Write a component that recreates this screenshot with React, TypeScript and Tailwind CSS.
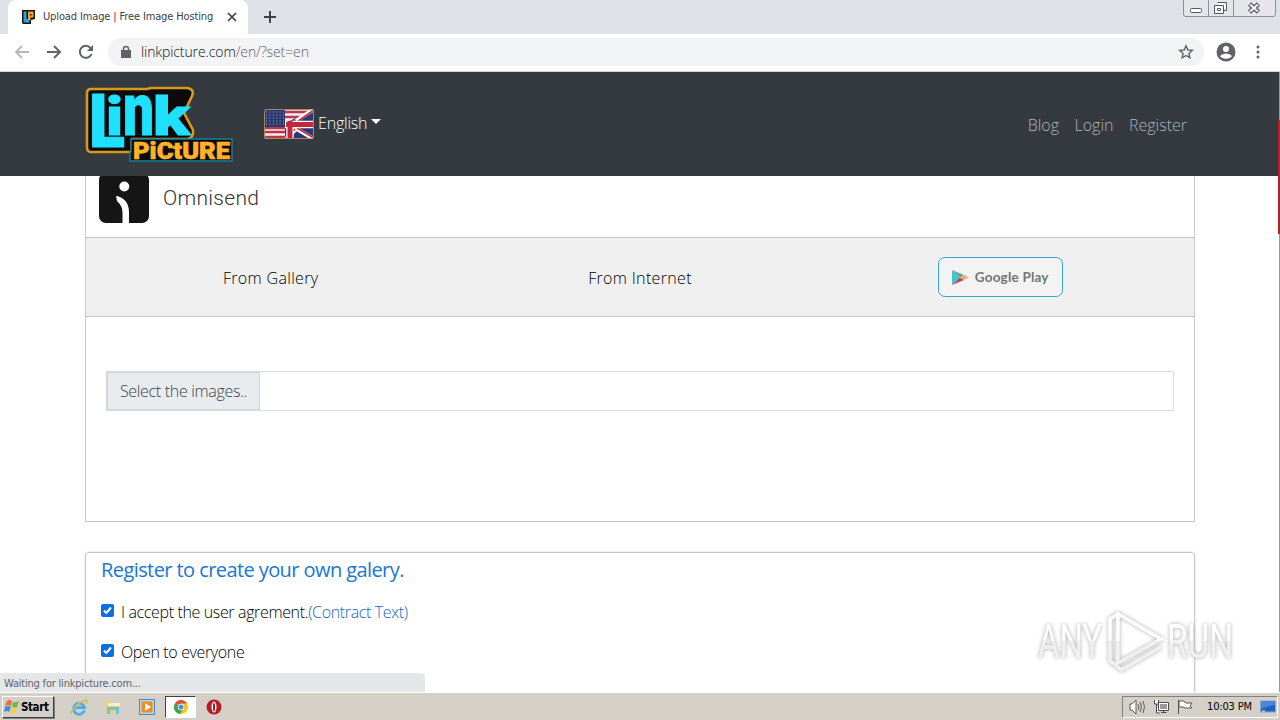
import type { ReactNode } from "react";

const LinkPictureLogo = () => (
  <svg width="148" height="77" viewBox="0 0 148 77" className="shrink-0 overflow-visible">
    <path
      d="M6 3H62L66 2H102Q110 3 107 10L99 27L108 44Q109 52 102 53H47V66H6Q2 66 2 61V7Q2 3 6 3Z"
      fill="#0b0b0b"
      stroke="#d99a1b"
      strokeWidth="2.6"
      strokeLinejoin="round"
    />
    <path d="M46 53H147V75H45V66H46Z" fill="#0b0b0b" stroke="#12829b" strokeWidth="1.5" />
    <g fontFamily="Roboto, sans-serif" fontWeight="900">
      <text fill="#1fe0ff" stroke="#1fe0ff" strokeWidth="1">
        <tspan x="4" y="61" fontSize="75" textLength="36" lengthAdjust="spacingAndGlyphs">L</tspan>
        <tspan x="21" y="48.500" fontSize="54" textLength="17" lengthAdjust="spacingAndGlyphs">i</tspan>
        <tspan x="38" y="48.500" fontSize="74" textLength="31" lengthAdjust="spacingAndGlyphs">n</tspan>
        <tspan x="68" y="48.500" fontSize="54" textLength="37" lengthAdjust="spacingAndGlyphs">k</tspan>
      </text>
      <text x="48" y="72.500" fontSize="23" fill="#ffb129" stroke="#ffb129" strokeWidth=".6" textLength="97" lengthAdjust="spacingAndGlyphs">
        PiCtURE
      </text>
    </g>
  </svg>
);

const Flag = () => (
  <svg width="50" height="30" viewBox="0 0 50 30" className="shrink-0 rounded-[3px]">
    <rect width="50" height="30" fill="#f3eef0" />
    <path d="M21 3H50M21 8H50M21 13H50M0 19H22M0 23H22M0 28H22" stroke="#bd3546" strokeWidth="2.4" />
    <path d="M50 0V30H21V14L34 8Z" fill="#283878" />
    <path d="M50 0L32 12M31 19L50 30M22 30L33 19" stroke="#fff" strokeWidth="4" />
    <path d="M50 1L33 13M33 19L50 29M22 29L31 20" stroke="#c1283c" strokeWidth="1.8" />
    <path d="M21 15.500H50M26 12V30" stroke="#fff" strokeWidth="7.500" />
    <path d="M22 15.500H50M26 12V30" stroke="#c1283c" strokeWidth="5" />
    <rect width="21" height="18" fill="#29386f" />
    {[3, 6, 9, 12, 15].map((y) => (
      <path key={y} d={`M2 ${y}H20`} stroke="#aab4d6" strokeWidth="1" strokeDasharray="1 2.4" />
    ))}
    <rect x=".5" y=".5" width="49" height="29" rx="3" fill="none" stroke="#a38a57" />
  </svg>
);

const Omnisend = () => (
  <svg width="50" height="50" viewBox="0 0 50 50" className="shrink-0">
    <rect width="50" height="50" rx="7" fill="#151515" />
    <circle cx="25.300" cy="13.500" r="5" fill="#fff" />
    <path d="M17 23C25 24 30 30 30 39V50H23.500V40C23.500 34 21 31 18 28Z" fill="#fff" />
  </svg>
);

const Browser = () => (
  <>
    <div className="flex h-[34px] shrink-0 items-start bg-[#dee1e6]">
      <div className="ml-2 flex h-[34px] w-[240px] items-center rounded-t-lg bg-white pl-3">
        <svg width="16" height="16" viewBox="0 0 16 16" className="shrink-0">
          <path d="M2 1H15V10L11 11V15H3L2 14Z" fill="#161616" />
          <path d="M3.500 2.500H6.500V10H9.500V13.500H3.500Z" fill="#28a5df" />
          <path d="M8 2.500H13.500V8.500H10.500V11H8Z" fill="#f0a034" />
          <path d="M10 5H11.500V6.500H10Z" fill="#161616" />
        </svg>
        <span className="mt-px ml-[7px] w-[172px] overflow-hidden font-['DejaVu_Sans_Condensed','DejaVu_Sans',sans-serif] text-[11px] tracking-[-0.13px] whitespace-nowrap text-[#3c4043]">
          Upload Image | Free Image Hosting
        </span>
        <svg width="16" height="16" viewBox="0 0 16 16" className="ml-[9px] shrink-0" stroke="#3c4043" strokeWidth="1.7">
          <path d="M4 4L12 12M12 4L4 12" />
        </svg>
      </div>
      <svg width="16" height="34" viewBox="0 0 16 34" className="ml-[14px]" stroke="#3c4043" strokeWidth="1.9">
        <path d="M2 17H14M8 11V23" />
      </svg>
      <svg width="93" height="18" viewBox="0 0 93 18" className="mr-[4px] ml-auto" fill="none">
        <path d="M.5 0V14Q.5 16.500 3 16.500H90Q92.500 16.500 92.500 14V0M25.500 0V16M50.500 0V16" fill="#e4e6e9" stroke="#8a8f98" />
        <rect x="7.500" y="8.500" width="11" height="4" rx="1" fill="#fff" stroke="#50555e" />
        <path d="M34.500 2.500H43.500V10.500H41M31.500 5.500H40.500V13.500H31.500ZM34.500 8.500H37.500V10.500H34.500Z" fill="#fff" stroke="#50555e" />
        <path d="M66.500 4L75.500 12M75.500 4L66.500 12" stroke="#50555e" strokeWidth="4.500" />
        <path d="M67 4.500L75 11.500M75 4.500L67 11.500" stroke="#f5f5f5" strokeWidth="2.200" />
      </svg>
    </div>
    <div className="flex h-[38px] shrink-0 items-center border-b border-[#d5d7da] bg-white pb-px pl-[14px]">
      <svg width="16" height="16" viewBox="0 0 16 16" fill="none" stroke="#b5b7b9" strokeWidth="1.8">
        <path d="M15 8H2M8 2L2 8L8 14" />
      </svg>
      <svg width="16" height="16" viewBox="0 0 16 16" className="ml-4" fill="none" stroke="#5f6368" strokeWidth="2">
        <path d="M1 8H14M8 2L14 8L8 14" />
      </svg>
      <svg width="16" height="16" viewBox="0 0 16 16" className="ml-4" fill="none" stroke="#5f6368" strokeWidth="2">
        <path d="M13.500 10A6 6 0 1 1 12.500 4" />
        <path d="M15 1V7H9Z" fill="#5f6368" stroke="none" />
      </svg>
      <div className="ml-[14px] flex h-7 w-[1096px] items-center rounded-full bg-[#f1f3f4] pr-[10px] pl-3">
        <svg width="12" height="14" viewBox="0 0 12 14" fill="#5f6368">
          <path d="M1 5H11V13H1Z" />
          <path d="M3.500 6V4A2.500 2.500 0 0 1 8.500 4V6" fill="none" stroke="#5f6368" strokeWidth="1.500" />
        </svg>
        <span className="mb-px ml-[9px] font-['Open_Sans',sans-serif] text-[14px] font-light tracking-[-0.1px] text-[#101114]">
          linkpicture.com<span className="text-[#5f6368]">/en/?set=en</span>
        </span>
        <svg width="16" height="16" viewBox="0 0 16 16" className="ml-auto" fill="none" stroke="#5f6368" strokeWidth="1.4">
          <path d="M8 1.800L9.800 6L14.300 6.400L10.900 9.400L11.900 13.800L8 11.500L4.100 13.800L5.100 9.400L1.700 6.400L6.200 6Z" />
        </svg>
      </div>
      <svg width="20" height="20" viewBox="0 0 20 20" className="ml-3">
        <circle cx="10" cy="10" r="9.500" fill="#5f6368" />
        <circle cx="10" cy="7" r="3" fill="#fff" />
        <path d="M4 14Q6 11.500 10 11.500T16 14Q14 16.800 10 16.800T4 14Z" fill="#fff" />
      </svg>
      <svg width="4" height="16" viewBox="0 0 4 16" className="ml-5" fill="#5f6368">
        <circle cx="2" cy="3" r="1.500" />
        <circle cx="2" cy="8" r="1.500" />
        <circle cx="2" cy="13" r="1.500" />
      </svg>
    </div>
  </>
);

const Navbar = () => (
  <nav className="flex h-[104px] shrink-0 items-center bg-[#343a40] pr-[93px] pl-[85px] text-base font-light">
    <LinkPictureLogo />
    <div className="ml-[31px] flex items-center text-white">
      <Flag />
      <span className="mb-[3px] ml-1 tracking-[-0.2px]">English</span>
      <span className="mb-[5px] ml-[4px] border-x-[5px] border-t-[5px] border-x-transparent border-t-white" />
    </div>
    <div className="mt-[2px] ml-auto flex gap-[15.5px] text-[#b0b3b6]">
      <span>Blog</span>
      <span>Login</span>
      <span>Register</span>
    </div>
  </nav>
);

const GooglePlay = () => (
  <div className="flex h-10 w-[125px] items-center rounded-[7px] border border-[#36a5d8] bg-[#f3f3f3] pl-3">
    <svg width="19" height="17" viewBox="0 0 19 17" className="shrink-0">
      <path d="M1 1V16L9 8.500Z" fill="#43c4c6" />
      <path d="M1 1L13 6L9 8.500Z" fill="#5ea995" />
      <path d="M1 16L13 11L9 8.500Z" fill="#bc4660" />
      <path d="M13 6L18 8.500L13 11L9 8.500Z" fill="#f8a978" />
    </svg>
    <span className="mt-px ml-[5px] font-['Lato',sans-serif] text-[13.5px] font-bold tracking-[0.2px] whitespace-nowrap text-[#747474]">
      Google Play
    </span>
  </div>
);

const CheckRow = ({ children }: { children: ReactNode }) => (
  <div className="flex h-10 items-center">
    <svg width="13" height="13" viewBox="0 0 13 13" className="mb-[2px] shrink-0">
      <rect width="13" height="13" rx="2" fill="#0b70e8" />
      <path d="M3 6.500L5.400 9L10 3.500" fill="none" stroke="#fff" strokeWidth="2" />
    </svg>
    <span className="mt-px ml-[7px] tracking-[-0.36px]">{children}</span>
  </div>
);

const AnyRun = () => (
  <svg width="200" height="70" viewBox="0 0 200 70" className="absolute top-[429px] left-[1036px] overflow-visible drop-shadow-[0_0_2px_#aaa]">
    <defs>
      <linearGradient id="mark" gradientUnits="userSpaceOnUse" x1="0" y1="0" x2="0" y2="70">
        <stop offset="0.5" stopColor="#fefefe" />
        <stop offset="0.52" stopColor="#f0f0f0" />
      </linearGradient>
    </defs>
    <g fill="url(#mark)" fontFamily="Roboto, sans-serif" fontSize="48" fontWeight="400">
      <text x="2" y="53" textLength="64" lengthAdjust="spacingAndGlyphs">ANY</text>
      <text x="131" y="53" textLength="66" lengthAdjust="spacingAndGlyphs">RUN</text>
    </g>
    <g fill="none" stroke="url(#mark)" strokeWidth="3.500">
      <path d="M82 9L81 57L81.500 57M84 8L74 14V56L80 60M82 9L125 34L82 58ZM80 60L85 65L125 42" />
    </g>
  </svg>
);

const Taskbar = () => (
  <footer className="flex h-7 shrink-0 items-center border-t border-white bg-[#d4d0c8] pl-[2px] font-['DejaVu_Sans_Condensed','DejaVu_Sans',sans-serif] text-[11px] text-black">
    <div className="flex h-[22px] w-[52px] items-center border border-t-white border-r-[#404040] border-b-[#404040] border-l-white pl-px shadow-[1px_1px_0_#808080]">
      <svg width="16" height="16" viewBox="0 0 16 16" className="shrink-0">
        <path d="M3 2Q5 0 8 2L7 7Q4 5 1 7Z" fill="#ec6c32" />
        <path d="M9 3Q12 4 15 2L13 8Q11 9 8 8Z" fill="#73b83d" />
        <path d="M1 8Q4 6 7 8L5 13Q3 11 0 13Z" fill="#3e8ddd" />
        <path d="M8 9Q10 10 13 9L11 14Q9 16 6 13Z" fill="#f5ce3d" />
      </svg>
      <span className="mt-[2px] ml-px text-[11.5px] font-bold tracking-[-0.4px]">Start</span>
    </div>
    <svg width="18" height="18" viewBox="0 0 18 18" className="ml-[16px]">
      <path d="M14.500 12A5.500 5.500 0 1 1 14.500 9.500H5" fill="none" stroke="#4cafe6" strokeWidth="2.8" />
      <path d="M2 15C-2 18 5 5 16 2Q18 2 16 6" fill="none" stroke="#d9b74e" strokeWidth="1.3" />
    </svg>
    <svg width="18" height="18" viewBox="0 0 18 18" className="ml-4">
      <path d="M2 3H7L8 5H16V15H2Z" fill="#e9cf75" />
      <path d="M4 5H16V8H4Z" fill="#faf1b6" />
      <path d="M3 9H15V16H12V12H6V16H3Z" fill="#79bddd" />
    </svg>
    <svg width="16" height="16" viewBox="0 0 16 16" className="ml-[17px]">
      <rect x=".5" y=".5" width="15" height="15" fill="#b4d5ed" stroke="#4c8cbc" />
      <rect x="2.500" y="2.500" width="11" height="11" rx="1" fill="#f28a19" />
      <path d="M6 4L12 8L6 12Z" fill="#fff" />
    </svg>
    <div className="ml-[10px] flex h-[22px] w-[31px] items-center justify-center border border-t-[#404040] border-r-white border-b-white border-l-[#404040] bg-white">
      <svg width="14" height="14" viewBox="0 0 14 14">
        <circle cx="7" cy="7" r="7" fill="#f4c51d" />
        <path d="M7 7L.9 3.500A7 7 0 0 1 13 3.500H7Z" fill="#de4d3d" />
        <path d="M7 7L.9 3.500A7 7 0 0 0 6 14L9 9Z" fill="#38a457" />
        <circle cx="7" cy="7" r="3.200" fill="#fff" />
        <circle cx="7" cy="7" r="2.500" fill="#4a8dec" />
      </svg>
    </div>
    <svg width="16" height="16" viewBox="0 0 16 16" className="ml-[10px]">
      <circle cx="8" cy="8" r="7.500" fill="#b71c23" />
      <ellipse cx="8" cy="8" rx="2.500" ry="5.500" fill="#fff" />
      <ellipse cx="8" cy="8" rx="1" ry="4.500" fill="#9a1a20" />
    </svg>
    <div className="mr-[2px] ml-auto flex h-[22px] w-[156px] items-center border border-t-[#808080] border-r-white border-b-white border-l-[#808080] pl-[6px]">
      <svg width="17" height="16" viewBox="0 0 17 16" fill="#fff" stroke="#5d5d5d">
        <path d="M1 5H3L7 1V15L3 11H1Z" />
        <path d="M9 5Q11 8 9 11M11 3Q14 8 11 13M14 2Q17 8 14 14" fill="none" />
      </svg>
      <svg width="17" height="16" viewBox="0 0 17 16" className="ml-[7px]" fill="#fff" stroke="#4c4c4c">
        <path d="M5.500 3.500H15.500V11.500H5.500ZM8 13.500H13.500M10.500 12V14M1.500 1V5H5.500V1M3.500 5V14H7" />
        <rect x="7" y="5" width="7" height="5" fill="#999" stroke="none" />
      </svg>
      <svg width="16" height="16" viewBox="0 0 16 16" className="ml-[7px]" fill="#fff" stroke="#555">
        <path d="M1.500 1V15M2 2H7L9 4H15L13 7L15 9H8L6 8H2Z" />
      </svg>
      <span className="mt-[2px] ml-[14px] tracking-[-0.15px] whitespace-nowrap">10:03 PM</span>
      <svg width="16" height="14" viewBox="0 0 16 14" className="mr-px ml-auto shrink-0">
        <rect x=".5" y="1" width="15" height="11" fill="#2161bc" stroke="#86a9d5" />
        <path d="M1 2H15V5Q8 6 1 9Z" fill="#4487d8" />
        <path d="M2 11H5" stroke="#e2efff" />
      </svg>
    </div>
  </footer>
);

const App = () => (
  <div className="relative flex h-[720px] w-[1280px] flex-col overflow-hidden bg-white font-['Open_Sans','Noto_Sans',sans-serif]">
    <Browser />
    <Navbar />
    <main className="relative h-[516px] shrink-0 overflow-hidden px-[85px] text-base font-light text-black">
      <section className="h-[346px] border-x border-b border-[#c8c8c8]">
        <div className="flex h-[61px] items-center pl-[13px]">
          <div className="-mt-[17px]">
            <Omnisend />
          </div>
          <span className="mb-[16px] ml-[14px] font-['Roboto',sans-serif] text-[21px] font-light tracking-[0.3px] text-[#333]">Omnisend</span>
        </div>
        <div className="grid h-[80px] grid-cols-3 items-center border-y border-[#c8c8c8] bg-[#f0f0f0] text-center">
          <span className="mt-[2px] tracking-[0.33px]">From Gallery</span>
          <span className="mt-[2px] tracking-[0.33px]">From Internet</span>
          <div className="flex justify-center pr-[18px]">
            <GooglePlay />
          </div>
        </div>
        <div className="mx-5 mt-[54px] flex h-10 border border-[#d9dcdf]">
          <div className="flex w-[153px] items-center justify-center border border-[#ced4da] bg-[#e9ecef] tracking-[-0.32px] text-[#3d4349]">
            Select the images..
          </div>
        </div>
      </section>
      <section className="mt-[30px] h-[160px] rounded-t border border-[#c8c8c8] px-[15px] shadow-[0_0_3px_#ddd]">
        <h2 className="flex h-[38px] items-center pb-[4px] text-[20px] font-normal tracking-[-0.58px] text-[#1976d2]">
          Register to create your own galery.
        </h2>
        <CheckRow>
          I accept the user agrement.<span className="text-[#1565c0]">(Contract Text)</span>
        </CheckRow>
        <CheckRow>Open to everyone</CheckRow>
      </section>
      <AnyRun />
      <div className="absolute bottom-0 left-0 flex h-[19px] w-[425px] items-center rounded-tr bg-[#e4e6e8] pt-[3px] pl-1 font-['DejaVu_Sans_Condensed','DejaVu_Sans',sans-serif] text-[11px] font-normal tracking-[-0.2px] text-[#60646a]">
        Waiting for linkpicture.com...
      </div>
    </main>
    <Taskbar />
    <div className="absolute top-[72px] right-0 flex h-[620px] w-px flex-col bg-[#999] pt-[48px]">
      <div className="-ml-px h-[114px] w-[2px] bg-[#b5202c]" />
    </div>
  </div>
);

export default App;
